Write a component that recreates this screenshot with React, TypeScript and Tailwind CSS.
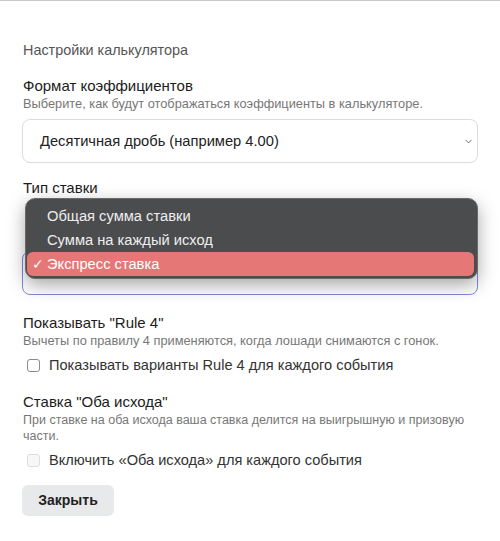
import React from 'react';
import { ChevronDown } from 'lucide-react';

const font = { fontFamily: '"Liberation Sans", Arial, sans-serif' };

const Checkbox: React.FC<{ label: string; disabled?: boolean }> = ({ label, disabled }) => (
  <label className="flex items-center h-[18px] gap-[9px] pl-[5px]">
    <span
      className={
        disabled
          ? 'w-[13px] h-[13px] rounded-[3px] border border-[#ddd] bg-[#f7f7f7]'
          : 'w-[13px] h-[13px] rounded-[3px] border border-[#8a8a8a] bg-white'
      }
    />
    <span className="text-[14.6px] text-[#333] leading-[18px]">{label}</span>
  </label>
);

const App: React.FC = () => {
  return (
    <div className="w-[500px] h-[541px] bg-white overflow-hidden" style={font}>
      <div className="relative h-full border-t border-[#c8c8c8] px-[22px] pt-[40px]">
        <div className="text-[14.4px] leading-[18px] text-[#555] pl-[1px]">Настройки калькулятора</div>

        <div className="mt-[18px] pl-[1px] text-[15px] leading-[18px] text-[#1c1c1c]">Формат коэффициентов</div>
        <div className="mt-[1px] pl-[1px] text-[12.8px] leading-[16px] text-[#777]">
          Выберите, как будут отображаться коэффициенты в калькуляторе.
        </div>
        <div className="mt-[7px] h-[44px] rounded-[8px] border border-[#dcdcdc] flex items-center justify-between pl-[17px] pr-[3px]">
          <span className="text-[14.7px] text-[#222]">Десятичная дробь (например 4.00)</span>
          <ChevronDown size={11} strokeWidth={1.5} className="text-[#333]" />
        </div>

        <div className="mt-[16px] pl-[1px] text-[15px] leading-[18px] text-[#1c1c1c]">Тип ставки</div>
        <div className="h-[54px]" />
        <div className="h-[44px] rounded-[8px] border border-[#7d8be0]" />

        <div className="mt-[19px] pl-[1px] text-[15px] leading-[18px] text-[#1c1c1c]">Показывать "Rule 4"</div>
        <div className="mt-[1px] pl-[1px] text-[12.8px] leading-[16px] text-[#777]">
          Вычеты по правилу 4 применяются, когда лошади снимаются с гонок.
        </div>
        <div className="mt-[7px]">
          <Checkbox label="Показывать варианты Rule 4 для каждого события" />
        </div>

        <div className="mt-[19px] pl-[1px] text-[15px] leading-[18px] text-[#1c1c1c]">Ставка "Оба исхода"</div>
        <div className="mt-[1px] pl-[1px] -mr-[4px] text-[12.5px] leading-[16px] text-[#777]">
          При ставке на оба исхода ваша ставка делится на выигрышную и призовую части.
        </div>
        <div className="mt-[7px]">
          <Checkbox label="Включить «Оба исхода» для каждого события" disabled />
        </div>

        <button className="mt-[16px] w-[92px] h-[31px] rounded-[6px] bg-[#e8e9eb] text-[14px] font-bold text-[#222]">
          Закрыть
        </button>

        <div className="absolute left-[25px] top-[197px] w-[453px] rounded-[10px] bg-[#4b4c4e] border border-[#6a6a6a] shadow-[0_6px_18px_rgba(0,0,0,0.35)] pt-[5px] pb-[2px] pl-[1px] pr-[3px]">
          <div className="h-[24px] flex items-center pl-[20px] text-[14.7px] text-[#eeeeee]">Общая сумма ставки</div>
          <div className="h-[24px] flex items-center pl-[20px] text-[14.7px] text-[#eeeeee]">Сумма на каждый исход</div>
          <div className="h-[24px] flex items-center rounded-[6px] bg-[#e57777] text-[14.7px] text-white">
            <span className="w-[20px] text-center text-[14px] pl-[2px]">✓</span>
            <span>Экспресс ставка</span>
          </div>
        </div>
      </div>
    </div>
  );
};

export default App;
